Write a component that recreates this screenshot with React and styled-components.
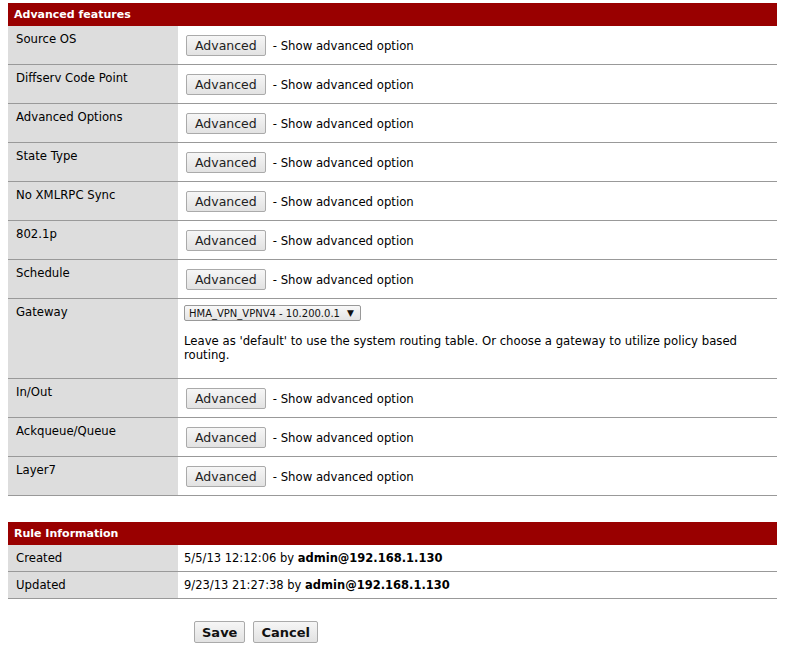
import React from 'react'
import styled, { createGlobalStyle } from 'styled-components'

const GlobalStyle = createGlobalStyle`
  body {
    margin: 3px 12px 0 8px;
    background: #fff;
    font-family: "DejaVu Sans", Verdana, sans-serif;
    font-size: 11.7px;
    color: #000;
  }
`

const advancedRows = [
  'Source OS',
  'Diffserv Code Point',
  'Advanced Options',
  'State Type',
  'No XMLRPC Sync',
  '802.1p',
  'Schedule',
]

const lateRows = ['In/Out', 'Ackqueue/Queue', 'Layer7']

function AdvancedRow({ label }) {
  return (
    <Row>
      <Label>{label}</Label>
      <Cell>
        <Button>Advanced</Button>
        <Hint>- Show advanced option</Hint>
      </Cell>
    </Row>
  )
}

function App() {
  return (
    <Page>
      <GlobalStyle />
      <Table>
        <Header>Advanced features</Header>
        {advancedRows.map(r => <AdvancedRow key={r} label={r} />)}
        <Row>
          <Label>Gateway</Label>
          <GatewayCell>
            <SelectBox>
              <span>HMA_VPN_VPNV4 - 10.200.0.1</span>
              <Arrow>▼</Arrow>
            </SelectBox>
            <Note>
              Leave as 'default' to use the system routing table. Or choose a gateway to utilize policy based routing.
            </Note>
          </GatewayCell>
        </Row>
        {lateRows.map(r => <AdvancedRow key={r} label={r} />)}
      </Table>

      <Table $spaced>
        <Header>Rule Information</Header>
        <InfoRow>
          <InfoLabel>Created</InfoLabel>
          <InfoCell>5/5/13 12:12:06 by <b>admin@192.168.1.130</b></InfoCell>
        </InfoRow>
        <InfoRow>
          <InfoLabel>Updated</InfoLabel>
          <InfoCell>9/23/13 21:27:38 by <b>admin@192.168.1.130</b></InfoCell>
        </InfoRow>
      </Table>

      <Actions>
        <FormButton>Save</FormButton>
        <FormButton>Cancel</FormButton>
      </Actions>
    </Page>
  )
}

export default App

const Page = styled.div`
  width: 769px;
`

const Table = styled.div`
  display: flex;
  flex-direction: column;
  margin-top: ${p => (p.$spaced ? '26px' : '0')};
`

const Header = styled.div`
  background: #990000;
  color: #fff;
  font-weight: bold;
  font-size: 11px;
  height: 23px;
  line-height: 23px;
  padding-left: 6px;
`

const Row = styled.div`
  display: flex;
  border-bottom: 1px solid #999;
  min-height: 38px;
`

const Label = styled.div`
  width: 154px;
  flex-shrink: 0;
  background: #dddddd;
  padding: 6px 8px;
  font-size: 11.7px;
  line-height: 15px;
`

const Cell = styled.div`
  flex: 1;
  display: flex;
  align-items: center;
  padding: 1px 6px 0 8px;
`

const GatewayCell = styled.div`
  flex: 1;
  padding: 6px 16px 16px 6px;
`

const Button = styled.button`
  font-family: "DejaVu Sans", Verdana, sans-serif;
  font-size: 12.5px;
  height: 21px;
  padding: 0 8px;
  border: 1px solid #aaa;
  border-radius: 2px;
  background: linear-gradient(#f6f6f6, #e2e2e2);
  color: #222;
  margin-right: 7px;
`

const Hint = styled.span`
  font-size: 11.7px;
`

const SelectBox = styled.div`
  display: inline-flex;
  align-items: center;
  gap: 7px;
  height: 14px;
  padding: 0 6px 0 4px;
  border: 1px solid #999;
  border-radius: 2px;
  background: linear-gradient(#f8f8f8, #e4e4e4);
  font-size: 10px;
  color: #111;
`

const Arrow = styled.span`
  font-size: 9px;
`

const Note = styled.div`
  margin-top: 13px;
  font-size: 11.7px;
  line-height: 14px;
`

const InfoRow = styled.div`
  display: flex;
  border-bottom: 1px solid #999;
  min-height: 26px;
`

const InfoLabel = styled.div`
  width: 162px;
  flex-shrink: 0;
  background: #dddddd;
  padding: 6px 0 0 8px;
  font-size: 11.7px;
  line-height: 14px;
`

const InfoCell = styled.div`
  flex: 1;
  padding: 6px 6px 0 6px;
  font-size: 11.5px;
  line-height: 14px;
`

const Actions = styled.div`
  display: flex;
  gap: 8px;
  margin: 22px 0 0 186px;
`

const FormButton = styled.button`
  font-family: "DejaVu Sans", Verdana, sans-serif;
  font-weight: bold;
  font-size: 13px;
  height: 22px;
  padding: 0 7px;
  border: 1px solid #aaa;
  border-radius: 2px;
  background: linear-gradient(#f6f6f6, #e2e2e2);
  color: #111;
`
